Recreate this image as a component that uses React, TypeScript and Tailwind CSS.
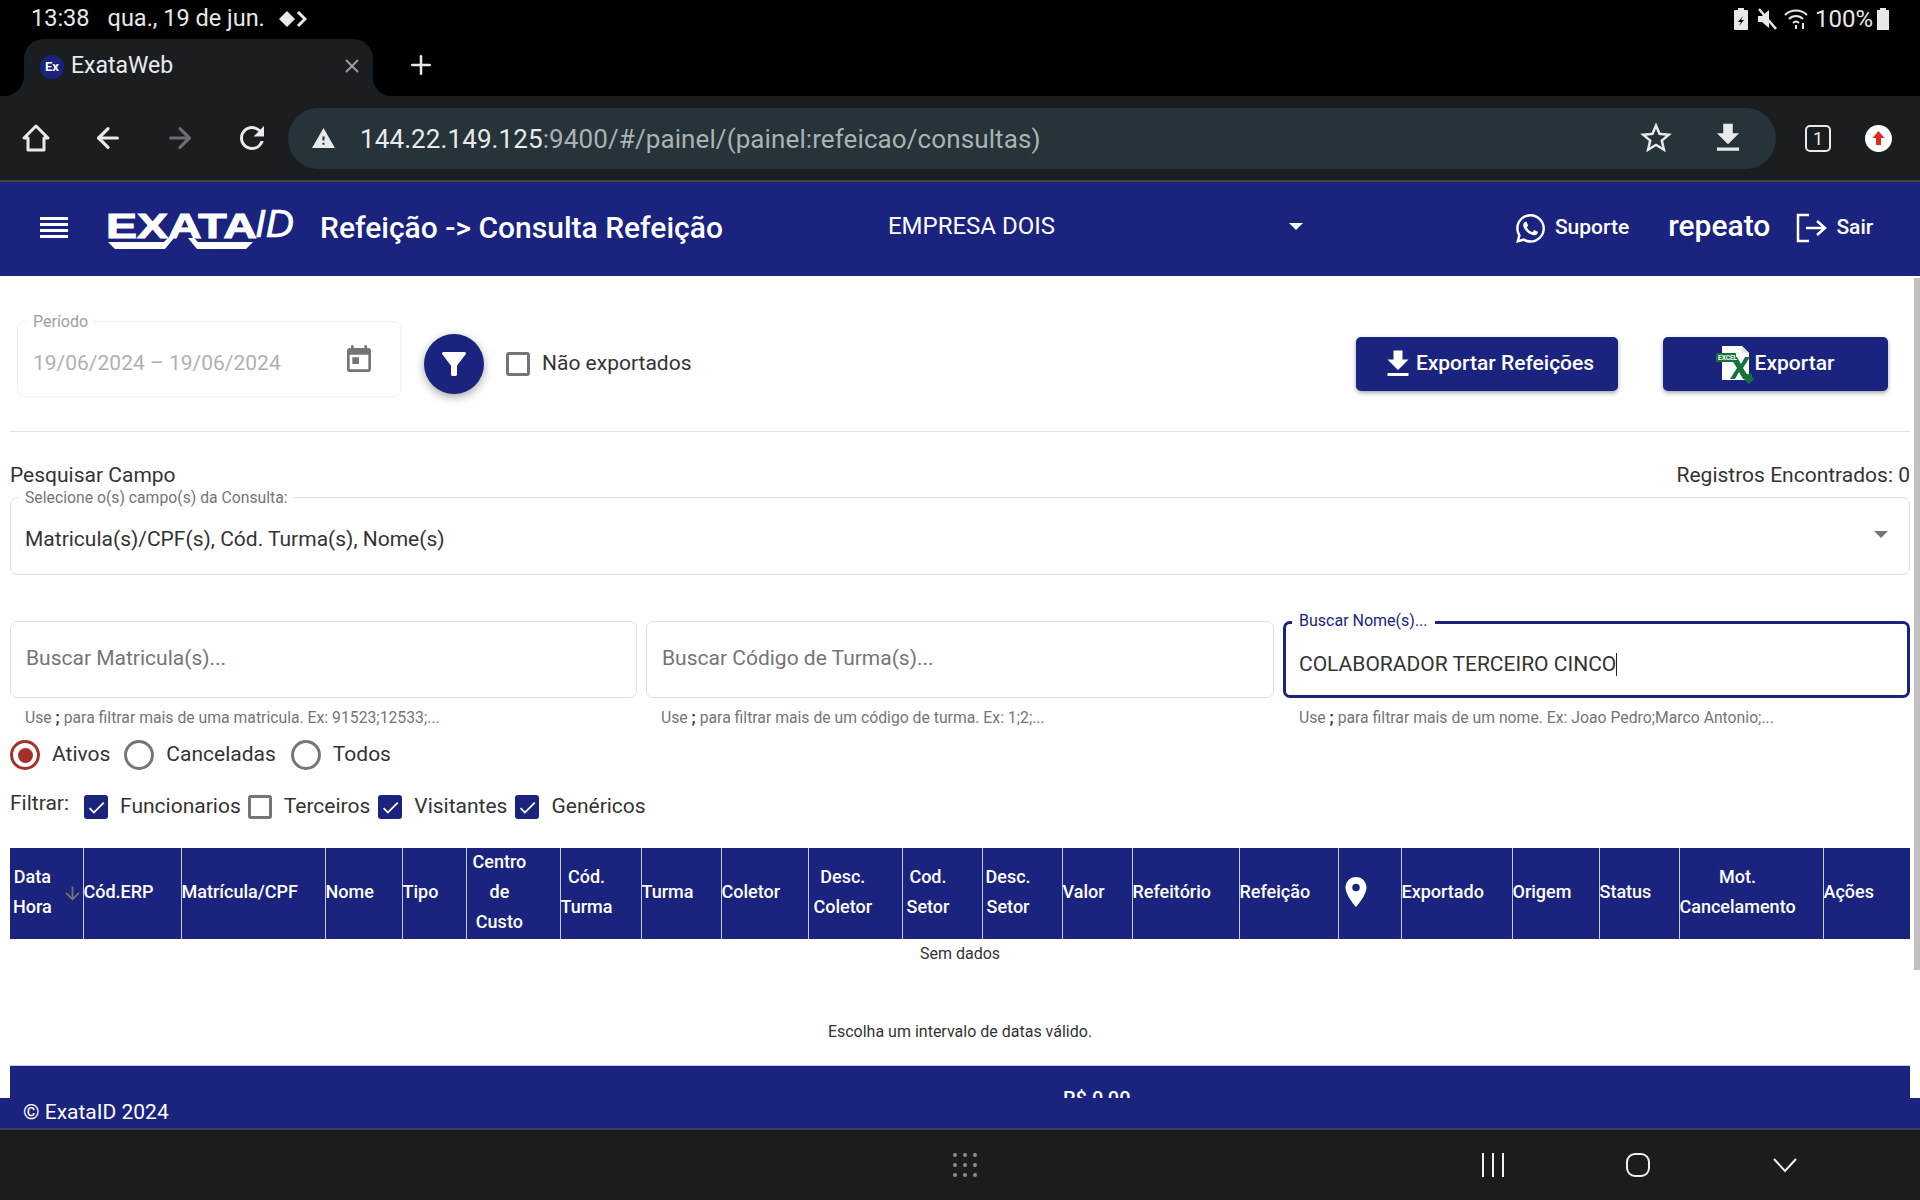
import React from 'react';
import { FaWhatsapp } from 'react-icons/fa';
import {
  MdArrowDownward,
  MdCheck,
  MdFileDownload,
  MdFilterAlt,
  MdLocationOn,
  MdRefresh,
  MdStarBorder,
  MdToday,
  MdWarning,
} from 'react-icons/md';
import { ArrowLeft, ArrowRight, Plus, X } from 'lucide-react';

interface Column {
  lines: string[];
  width: string;
  pad?: string;
}

// Column widths measured from the table header
const columns: Column[] = [
  { lines: ['Data', 'Hora'], width: 'w-[73px]', pad: 'pl-[3px]' },
  { lines: ['Cód.ERP'], width: 'w-[98px]' },
  { lines: ['Matrícula/CPF'], width: 'w-[144px]' },
  { lines: ['Nome'], width: 'w-[77px]' },
  { lines: ['Tipo'], width: 'w-[64px]' },
  { lines: ['Centro', 'de', 'Custo'], width: 'w-[94px]', pad: 'pl-[6px]' },
  { lines: ['Cód.', 'Turma'], width: 'w-[81px]' },
  { lines: ['Turma'], width: 'w-[80px]' },
  { lines: ['Coletor'], width: 'w-[87px]' },
  { lines: ['Desc.', 'Coletor'], width: 'w-[94px]', pad: 'pl-[5px]' },
  { lines: ['Cod.', 'Setor'], width: 'w-[80px]', pad: 'pl-[4px]' },
  { lines: ['Desc.', 'Setor'], width: 'w-[80px]', pad: 'pl-[3px]' },
  { lines: ['Valor'], width: 'w-[70px]' },
  { lines: ['Refeitório'], width: 'w-[107px]' },
  { lines: ['Refeição'], width: 'w-[99px]' },
  { lines: [], width: 'w-[63px]' },
  { lines: ['Exportado'], width: 'w-[111px]' },
  { lines: ['Origem'], width: 'w-[87px]' },
  { lines: ['Status'], width: 'w-[80px]' },
  { lines: ['Mot.', 'Cancelamento'], width: 'w-[144px]' },
  { lines: ['Ações'], width: 'w-[87px]' },
];

const Radio = ({ label, checked, className }: { label: string; checked?: boolean; className: string }) => (
  <div className={`flex items-center gap-[12px] ${className}`}>
    <span
      className={`flex h-[30px] w-[30px] items-center justify-center rounded-full border-[3px] ${
        checked ? 'border-[#a5302a]' : 'border-[#757575]'
      }`}
    >
      {checked && <span className="h-[15px] w-[15px] rounded-full bg-[#a5302a]" />}
    </span>
    <span className="text-[21px] text-[#333]">{label}</span>
  </div>
);

const Check = ({ label, checked, className }: { label: string; checked?: boolean; className: string }) => (
  <div className={`flex items-center gap-[12px] ${className}`}>
    {checked ? (
      <span className="flex h-[24px] w-[24px] items-center justify-center rounded-[3px] bg-[#1a237e] text-white">
        <MdCheck size={21} />
      </span>
    ) : (
      <span className="h-[24px] w-[24px] rounded-[3px] border-[3px] border-[#757575]" />
    )}
    <span className="text-[21px] text-[#333]">{label}</span>
  </div>
);

const SearchInput = ({ placeholder, hint, className }: { placeholder: string; hint: string; className: string }) => (
  <div className={className}>
    <div className="flex h-[77px] items-center rounded-[7px] border border-[#e0e0e0] pb-[2px] pl-[15px] text-[21px] text-[#757575]">
      {placeholder}
    </div>
    <p className="mt-[9px] h-[22px] pl-[15px] text-[15.75px] leading-[22px] text-[#757575]">
      Use <b className="font-bold text-[#333]">;</b> {hint}
    </p>
  </div>
);

const ExcelIcon = () => (
  <svg width="40" height="40" viewBox="0 0 40 40" className="shrink-0">
    <path d="M7 2h20l7 7v27H7z" fill="#fff" />
    <path d="M27 2l7 7h-7z" fill="#dfe5e2" />
    <path d="M15 13h7l4 7 4-7h5l-7 11 7 11h-7l-4-7-4 7h-5l7-11z" fill="#17733c" />
    <rect x="1" y="9" width="20" height="9" rx="1" fill="#17733c" />
    <text x="3" y="16" fontSize="6.5" fontWeight="700" fill="#fff" fontFamily="Roboto, sans-serif">
      EXCEL
    </text>
    <path d="M31 30h6v4h3l-6 6-6-6h3z" fill="#17733c" />
  </svg>
);

const Logo = () => (
  <div className="relative h-[46px] w-[190px] shrink-0 font-['Liberation_Sans',sans-serif] text-white">
    <span className="absolute left-0 top-[-2px] origin-left scale-x-[1.33] text-[35px] font-bold leading-[46px] [-webkit-text-stroke:1px_white]">
      EXATA
    </span>
    <span className="absolute left-[149px] top-[-4px] text-[39px] italic leading-[46px] [-webkit-text-stroke:0.6px_white]">
      ID
    </span>
    <svg width="150" height="12" viewBox="0 0 150 12" className="absolute left-0 top-[33px]">
      <path d="M2 4h56l4-4h6l-9 11H9zM82 0h6l4 4h55l-7 7H91z" fill="#fff" />
    </svg>
  </div>
);

const App: React.FC = () => {
  return (
    <div className="flex h-[1200px] w-[1920px] flex-col overflow-hidden bg-white font-['Roboto',sans-serif]">
      {/* Android status bar */}
      <div className="flex h-[38px] shrink-0 items-center bg-black pl-[31px] pr-[30px] text-[23.5px] text-[#e8e8e8]">
        <span>13:38</span>
        <span className="ml-[18px]">qua., 19 de jun.</span>
        <svg width="28" height="18" viewBox="0 0 28 18" className="ml-[14px]">
          <path d="M8 1l8 8-8 8-8-8z" fill="#e8e8e8" />
          <path d="M19 2l7 7-7 7" fill="none" stroke="#e8e8e8" strokeWidth="3" />
        </svg>
        <div className="ml-auto flex items-center">
          <svg width="16" height="24" viewBox="0 0 16 24">
            <path d="M5 1h6v2h3a1 1 0 011 1v18a1 1 0 01-1 1H2a1 1 0 01-1-1V4a1 1 0 011-1h3z" fill="#e8e8e8" />
            <path d="M10 9l-5 6h3l-2 4 5-6H8z" fill="#000" />
          </svg>
          <svg width="22" height="24" viewBox="0 0 22 24" className="ml-[7px]">
            <path d="M2 9h4l7-6v18l-7-6H2z" fill="#e8e8e8" />
            <path d="M3 2l17 20" stroke="#e8e8e8" strokeWidth="2.5" />
          </svg>
          <svg width="24" height="22" viewBox="0 0 24 22" className="ml-[6px]" fill="none" stroke="#e8e8e8" strokeWidth="2">
            <path d="M1 7c6-6 16-6 22 0M5 11c4-4 10-4 14 0M9 15c2-2 4-2 6 0" />
            <path d="M12 17v4M19 15v6" />
          </svg>
          <span className="ml-[7px] text-[24px]">100%</span>
          <svg width="14" height="24" viewBox="0 0 14 24" className="ml-[3px]">
            <path d="M4 1h6v2h3v20H1V3h3z" fill="#e8e8e8" />
          </svg>
        </div>
      </div>

      {/* Tab strip */}
      <div className="flex h-[58px] shrink-0 items-end bg-black">
        <div className="h-[20px] w-[24px] bg-[#1b1e20]">
          <div className="h-full w-full rounded-br-[20px] bg-black" />
        </div>
        <div className="flex h-[57px] w-[349px] items-center rounded-t-[20px] bg-[#1b1e20] pb-[2px] pl-[16px] pr-[10px]">
          <span className="flex h-[24px] w-[24px] items-center justify-center rounded-full bg-[#1a237e] text-[13px] font-bold text-white">
            Ex
          </span>
          <span className="ml-[7px] text-[23px] text-[#e8eaed]">ExataWeb</span>
          <X size={22} className="mb-[2px] ml-auto text-[#9aa0a6]" />
        </div>
        <div className="h-[20px] w-[18px] bg-[#1b1e20]">
          <div className="h-full w-full rounded-bl-[20px] bg-black" />
        </div>
        <Plus size={30} className="mb-[16px] ml-[15px] text-[#e8eaed]" />
      </div>

      {/* Browser toolbar */}
      <div className="flex h-[84px] shrink-0 items-center bg-[#1b1e20] text-[#e8eaed]">
        <svg width="30" height="30" viewBox="0 0 30 30" className="ml-[21px]" fill="none" stroke="#e8eaed" strokeWidth="3" strokeLinejoin="round">
          <path d="M15 3L3 15h4v12h16V15h4z" />
        </svg>
        <ArrowLeft size={32} strokeWidth={2.4} className="ml-[41px]" />
        <ArrowRight size={32} strokeWidth={2.4} className="ml-[40px] text-[#6a6e72]" />
        <MdRefresh size={36} className="ml-[38px]" />
        <div className="ml-[18px] flex h-[61px] w-[1488px] items-center rounded-full bg-[#263338] pl-[23px]">
          <MdWarning size={25} />
          <span className="ml-[24px] mt-[2px] text-[26px] tracking-[0.1px] text-[#aab2b5]">
            <span className="text-[#e8eaed]">144.22.149.125</span>:9400/#/painel/(painel:refeicao/consultas)
          </span>
          <MdStarBorder size={38} className="ml-auto" />
          <MdFileDownload size={38} className="ml-[34px] mr-[29px]" />
        </div>
        <span className="ml-[29px] flex h-[27px] w-[26px] items-center justify-center rounded-[5px] border-[2.5px] border-[#e8eaed] text-[18px]">
          1
        </span>
        <svg width="27" height="27" viewBox="0 0 27 27" className="ml-[34px]">
          <circle cx="13.5" cy="13.5" r="13.5" fill="#fff" />
          <path d="M13.5 6l6 7h-3.5v7h-5v-7H7.500z" fill="#e02a20" />
        </svg>
      </div>
      <div className="h-[2px] shrink-0 bg-[#3d4a40]" />

      {/* App header */}
      <header className="flex h-[94px] shrink-0 items-center bg-[#1a237e] pb-[2px] pl-[40px] text-white">
        <svg width="28" height="22" viewBox="0 0 28 22" fill="#fff" className="shrink-0">
          <rect y="0" width="28" height="3" />
          <rect y="6" width="28" height="3" />
          <rect y="12" width="28" height="3" />
          <rect y="18" width="28" height="3" />
        </svg>
        <div className="ml-[38px]">
          <Logo />
        </div>
        <h1 className="mb-[2px] ml-[24px] text-[30px] font-medium">Refeição -&gt; Consulta Refeição</h1>
        <div className="mb-[4px] ml-[165px] flex w-[419px] items-center">
          <span className="text-[24px]">EMPRESA DOIS</span>
          <span className="ml-auto mr-[4px] h-0 w-0 border-x-[7px] border-t-[7px] border-x-transparent border-t-white" />
        </div>
        <FaWhatsapp size={33} className="ml-[207px]" />
        <span className="ml-[8px] text-[21px] font-medium">Suporte</span>
        <span className="mb-[4px] ml-[39px] text-[30px] font-medium leading-none">repeato</span>
        <svg width="32" height="30" viewBox="0 0 32 30" fill="none" stroke="#fff" strokeWidth="2.5" className="ml-[26px]">
          <path d="M13 2H2v26h11M10 15h19M21 8l8 7-8 7" />
        </svg>
        <span className="ml-[8px] text-[21px] font-medium">Sair</span>
      </header>

      {/* Page content, cut off by the footer */}
      <main className="relative flex-1 overflow-hidden">
        <div className="absolute right-0 top-[2px] h-[692px] w-[6px] bg-[#c1c1c1]" />

        <div className="mt-[45px] flex h-[76px] pl-[17px] pr-[32px]">
          <div className="relative flex h-[76px] w-[384px] items-center rounded-[7px] border border-[#f0f0f0] pl-[15px] pr-[25px]">
            <span className="absolute left-[9px] top-[-10px] bg-white px-[6px] text-[16px] leading-[20px] text-[#9e9e9e]">
              Período
            </span>
            <span className="mt-[10px] text-[21px] text-[#b0b0b0]">19/06/2024 – 19/06/2024</span>
            <MdToday size={32} className="ml-auto mt-[2px] text-[#757575]" />
          </div>
          <div className="flex flex-1 items-center pt-[10px]">
            <span className="ml-[23px] flex h-[60px] w-[60px] items-center justify-center rounded-full bg-[#1a237e] text-white shadow-[0_3px_10px_rgba(0,0,0,0.35)]">
              <MdFilterAlt size={36} />
            </span>
            <span className="ml-[22px] h-[24px] w-[24px] rounded-[3px] border-[3px] border-[#757575]" />
            <span className="ml-[12px] text-[21px] text-[#333]">Não exportados</span>
            <button className="ml-auto flex h-[54px] w-[262px] items-center justify-center rounded-[5px] bg-[#1a237e] text-[21px] font-medium text-white shadow-[0_2px_4px_rgba(0,0,0,0.35)]">
              <MdFileDownload size={36} />
              Exportar Refeições
            </button>
            <button className="ml-[45px] flex h-[54px] w-[225px] items-center justify-center rounded-[5px] bg-[#1a237e] pr-[2px] text-[21px] font-medium text-white shadow-[0_2px_4px_rgba(0,0,0,0.35)]">
              <ExcelIcon />
              Exportar
            </button>
          </div>
        </div>

        <div className="mx-[10px] mt-[34px] h-px bg-[#e0e0e0]" />

        <div className="mx-[10px] mt-[32px] flex h-[24px] items-center justify-between text-[21px] text-[#333]">
          <span>Pesquisar Campo</span>
          <span>Registros Encontrados: 0</span>
        </div>

        <div className="relative mx-[10px] mt-[9px] flex h-[78px] items-center rounded-[7px] border border-[#e0e0e0] pl-[14px] pr-[21px]">
          <span className="absolute left-[8px] top-[-10px] bg-white px-[6px] text-[15.75px] leading-[20px] text-[#757575]">
            Selecione o(s) campo(s) da Consulta:
          </span>
          <span className="mt-[8px] text-[21px] text-[#333]">Matricula(s)/CPF(s), Cód. Turma(s), Nome(s)</span>
          <span className="mb-[4px] ml-auto h-0 w-0 border-x-[7px] border-t-[7px] border-x-transparent border-t-[#757575]" />
        </div>

        <div className="ml-[10px] mt-[46px] flex w-[1900px]">
          <SearchInput
            className="w-[627px]"
            placeholder="Buscar Matricula(s)..."
            hint="para filtrar mais de uma matricula. Ex: 91523;12533;..."
          />
          <SearchInput
            className="ml-[9px] w-[628px]"
            placeholder="Buscar Código de Turma(s)..."
            hint="para filtrar mais de um código de turma. Ex: 1;2;..."
          />
          <div className="ml-[9px] w-[627px]">
            <div className="relative flex h-[77px] items-center rounded-[7px] border-[3px] border-[#1a237e] pl-[13px] text-[21px] text-[#333]">
              <span className="absolute left-[6px] top-[-13px] bg-white px-[7px] text-[16px] leading-[20px] text-[#1a237e]">
                Buscar Nome(s)...
              </span>
              <span className="mt-[10px]">COLABORADOR TERCEIRO CINCO</span>
              <span className="mt-[10px] h-[23px] w-px bg-[#222]" />
            </div>
            <p className="mt-[9px] h-[22px] pl-[16px] text-[15.75px] leading-[22px] text-[#757575]">
              Use <b className="font-bold text-[#333]">;</b> para filtrar mais de um nome. Ex: Joao Pedro;Marco Antonio;...
            </p>
          </div>
        </div>

        <div className="ml-[10px] mt-[11px] flex h-[30px] items-center">
          <Radio label="Ativos" checked className="" />
          <Radio label="Canceladas" className="ml-[14px]" />
          <Radio label="Todos" className="ml-[15px]" />
        </div>

        <div className="ml-[10px] mt-[25px] flex h-[24px] items-center">
          <span className="mb-[7px] text-[21px] text-[#333]">Filtrar:</span>
          <Check label="Funcionarios" checked className="ml-[15px]" />
          <Check label="Terceiros" className="ml-[7px]" />
          <Check label="Visitantes" checked className="ml-[8px]" />
          <Check label="Genéricos" checked className="ml-[8px]" />
        </div>

        <table className="ml-[10px] mt-[29px] w-[1900px] table-fixed border-collapse bg-[#1a237e] text-white">
          <colgroup>
            {columns.map((col, i) => (
              <col key={i} className={col.width} />
            ))}
          </colgroup>
          <thead>
            <tr className="h-[91px]">
              {columns.map((col, i) => (
                <th key={i} className="border-l border-[#c5cae9] p-0 text-[18px] font-medium leading-[30px] first:border-l-0">
                  <div className={`-mt-[3px] flex items-center ${col.pad ?? ''}`}>
                    {col.lines.length > 0 ? (
                      <div className="whitespace-nowrap text-center">
                        {col.lines.map((line) => (
                          <div key={line}>{line}</div>
                        ))}
                      </div>
                    ) : (
                      <MdLocationOn size={36} className="-ml-[1px]" />
                    )}
                    {i === 0 && <MdArrowDownward size={21} className="ml-auto mt-[2px] text-[#757575]" />}
                  </div>
                </th>
              ))}
            </tr>
          </thead>
        </table>

        <p className="mt-[4px] h-[22px] text-center text-[16px] leading-[22px] text-[#333]">Sem dados</p>
        <p className="mt-[56px] h-[22px] text-center text-[16px] leading-[22px] text-[#333]">
          Escolha um intervalo de datas válido.
        </p>

        <div className="mx-[10px] mt-[22px] h-[100px] border-t border-[#c5cae9] bg-[#1a237e] pl-[1053px] pt-[21px] text-[20px] font-medium leading-[24px] text-white">
          R$ 0,00
        </div>
      </main>

      <footer className="flex h-[30px] shrink-0 items-center bg-[#1a237e] pl-[23px] text-[21px] text-white">
        © ExataID 2024
      </footer>
      <div className="h-[2px] shrink-0 bg-[#3a3f5c]" />

      {/* Android navigation bar */}
      <div className="flex h-[70px] shrink-0 items-center bg-[#1a1d1f]">
        <svg width="26" height="24" viewBox="0 0 26 24" fill="#8a8d8f" className="ml-[952px]">
          {[2, 12, 22].map((y) =>
            [3, 13, 23].map((x) => <circle key={`${x}-${y}`} cx={x} cy={y} r="2" />)
          )}
        </svg>
        <svg width="24" height="24" viewBox="0 0 24 24" stroke="#f0f0f0" strokeWidth="2" className="ml-[503px]">
          <path d="M2 0v24M12 0v24M22 0v24" />
        </svg>
        <svg width="24" height="24" viewBox="0 0 24 24" fill="none" stroke="#f0f0f0" strokeWidth="2" className="ml-[121px]">
          <rect x="1" y="1" width="22" height="22" rx="8" />
        </svg>
        <svg width="26" height="16" viewBox="0 0 26 16" fill="none" stroke="#f0f0f0" strokeWidth="2" className="ml-[122px]">
          <path d="M2 2l11 12L24 2" />
        </svg>
      </div>
    </div>
  );
};

export default App;
